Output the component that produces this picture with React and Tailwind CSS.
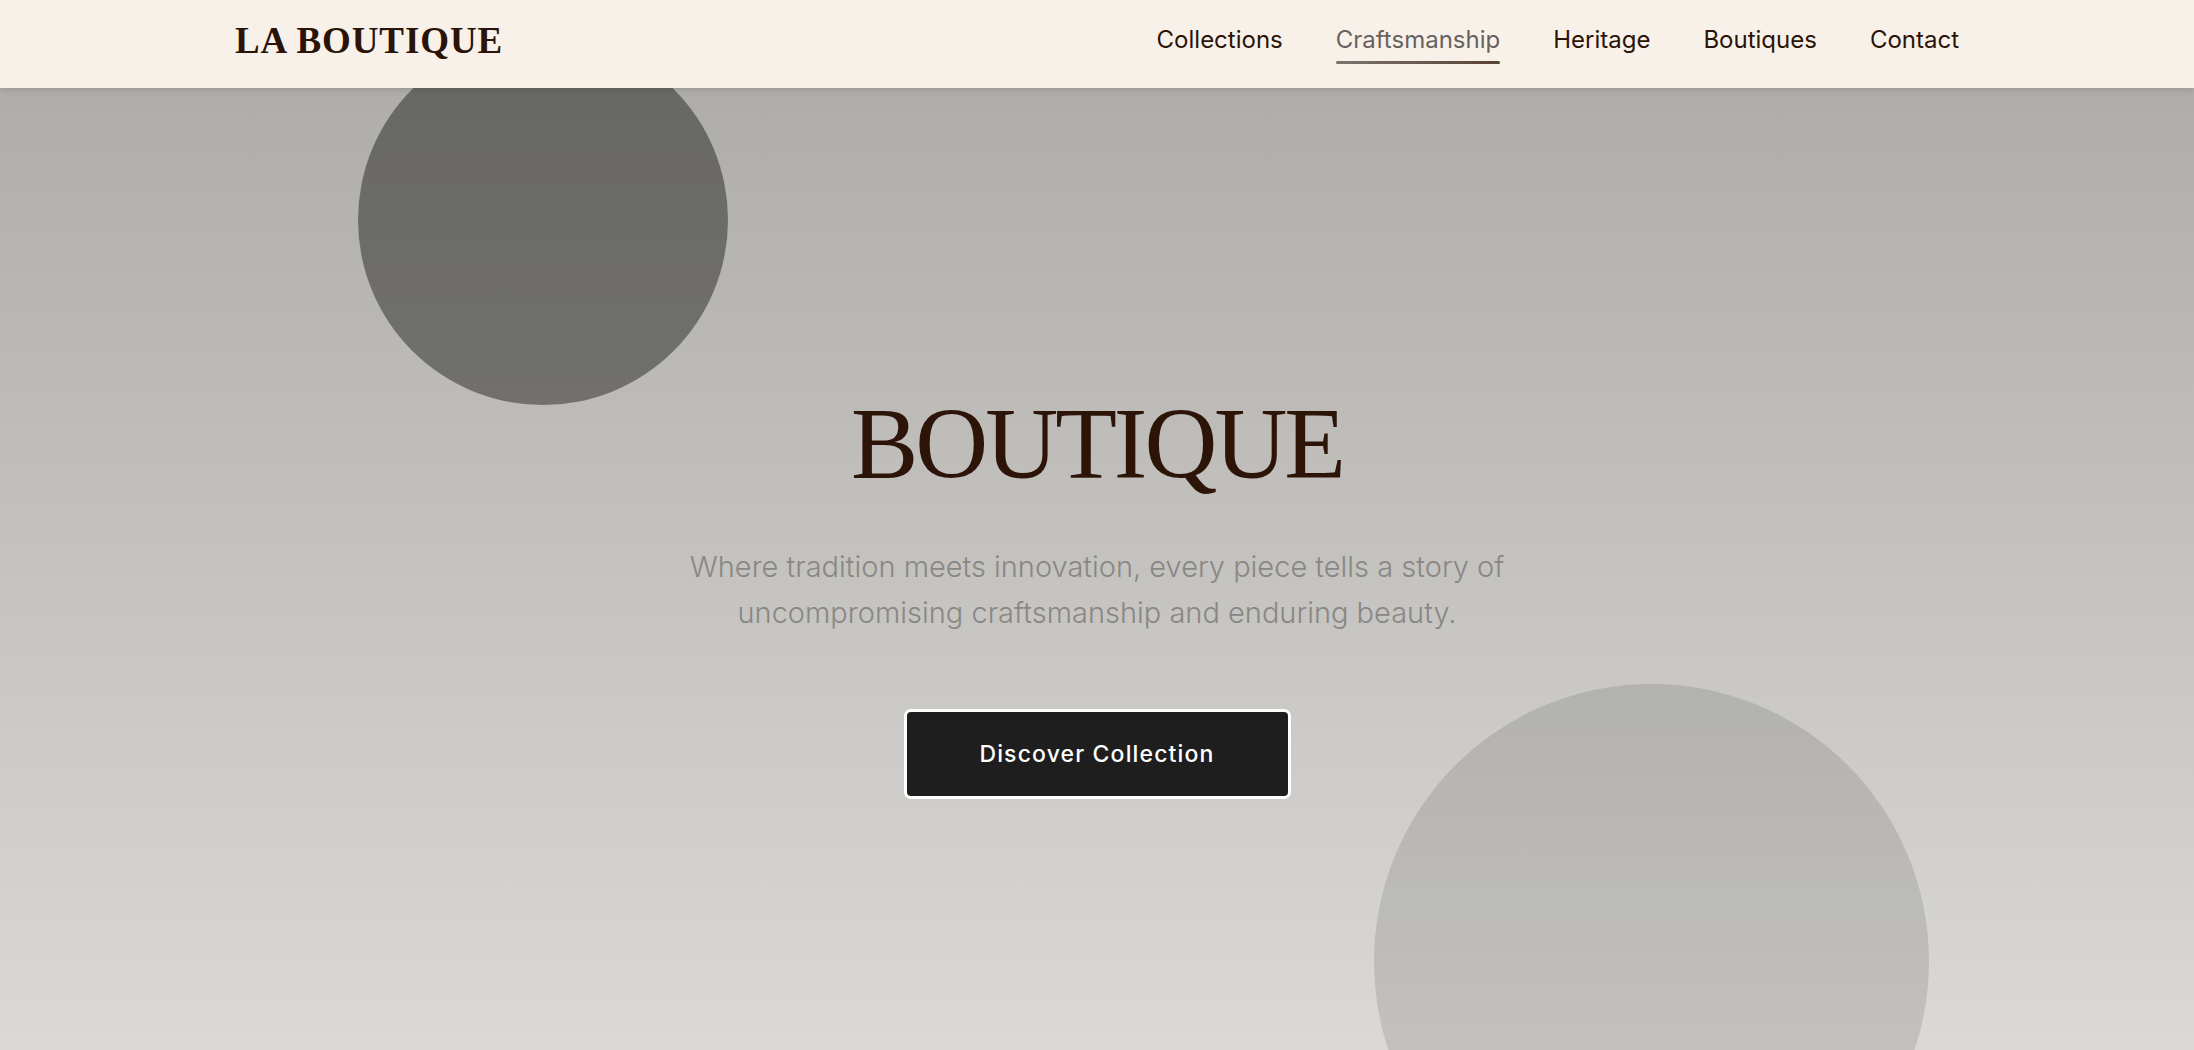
const navLinks = ['Collections', 'Craftsmanship', 'Heritage', 'Boutiques', 'Contact']

export default function App() {
  const serif = { fontFamily: '"Liberation Serif", "Times New Roman", serif' }

  return (
    <div className="h-[1050px] w-full overflow-hidden" style={{ fontFamily: 'Inter, "Liberation Sans", sans-serif' }}>
      {/* Header */}
      <header className="relative z-10 h-[88px] bg-[#f8f1ea] shadow-[0_2px_6px_rgba(0,0,0,0.12)]">
        <div className="mx-auto flex h-full max-w-[1792px] items-center justify-between px-[34px] pb-[8px]">
          <a className="text-[37px] font-bold leading-none tracking-[0.025em] text-[#2a1408]" style={serif}>
            LA BOUTIQUE
          </a>
          <nav className="flex items-center gap-[53px]">
            {navLinks.map((link) => (
              <a
                key={link}
                className={`relative text-[24px] leading-none ${
                  link === 'Craftsmanship' ? 'text-[#67625e]' : 'text-[#2a1408]'
                }`}
              >
                {link}
                {link === 'Craftsmanship' && (
                  <span className="absolute left-0 right-0 -bottom-[12px] h-[3px] rounded-full bg-gradient-to-r from-[#7a7470] to-[#5a4234]" />
                )}
              </a>
            ))}
          </nav>
        </div>
      </header>

      {/* Hero */}
      <section className="relative h-[962px] bg-gradient-to-b from-[#aeada9] to-[#dad9d7]">
        {/* decorative circles */}
        <div className="absolute left-[358px] -top-[53px] h-[370px] w-[370px] rounded-full bg-black/40" />
        <div className="absolute left-[1374px] top-[596px] h-[555px] w-[555px] rounded-full bg-black/[0.11]" />

        <div className="relative flex flex-col items-center pt-[301px] text-center">
          <h1 className="text-[101px] leading-[1.1] tracking-[-3px] text-[#2d1408]" style={serif}>
            BOUTIQUE
          </h1>
          <p className="mt-[44px] max-w-[840px] text-[29px] font-light leading-[46px] text-[#898784]">
            Where tradition meets innovation, every piece tells a story of uncompromising craftsmanship and enduring beauty.
          </p>
          <button className="mt-[73px] flex h-[90px] w-[387px] items-center justify-center rounded-[7px] border-[3px] border-white bg-[#1e1e1e] text-[23px] font-medium tracking-[0.05em] text-white">
            Discover Collection
          </button>
        </div>
      </section>
    </div>
  )
}
